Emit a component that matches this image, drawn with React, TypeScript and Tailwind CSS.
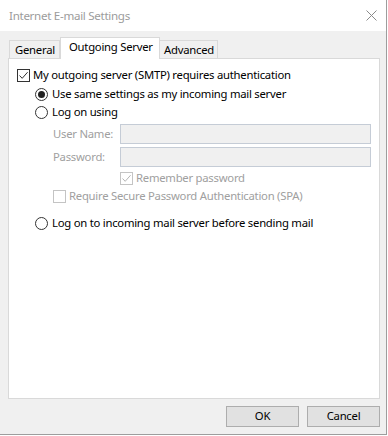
import React from 'react';

const FONT = { fontFamily: '"Noto Sans", "Segoe UI", sans-serif' };

function CheckBox({ checked, disabled }: { checked?: boolean; disabled?: boolean }) {
  const border = disabled ? 'border-[#c4c4c4]' : 'border-[#333333]';
  const stroke = disabled ? '#b5b5b5' : '#333333';
  return (
    <span className={`w-[13px] h-[13px] border ${border} bg-white flex items-center justify-center shrink-0`}>
      {checked && (
        <svg width="11" height="11" viewBox="0 0 11 11">
          <path d="M1.5 5.5 L4.2 8.3 L9.6 2.2" fill="none" stroke={stroke} strokeWidth="1" />
        </svg>
      )}
    </span>
  );
}

function Radio({ checked }: { checked?: boolean }) {
  return (
    <span className="w-[13px] h-[13px] rounded-full border border-[#333333] bg-white flex items-center justify-center shrink-0">
      {checked && <span className="w-[7px] h-[7px] rounded-full bg-[#222222]" />}
    </span>
  );
}

function Field({ label }: { label: string }) {
  return (
    <div className="flex items-center pl-[44px]">
      <span className="w-[67px] text-[#a0a0a0]">{label}</span>
      <div className="w-[251px] h-[20px] border border-[#c5ccd6] bg-[#f0f0f0]" />
    </div>
  );
}

export default function App() {
  return (
    <div className="w-[388px] h-[436px] bg-white overflow-hidden text-[11.3px] tracking-[-0.25px] text-black whitespace-nowrap" style={FONT}>
      <div className="w-[387px] h-[435px] border-r border-b border-[#9d9d9d] flex flex-col">
        {/* title bar */}
        <div className="h-[31px] bg-white flex items-center justify-between pl-[9px] pr-[9px] shrink-0">
          <span className="text-[#9c9c9c] leading-none text-[11.6px] tracking-[-0.3px]">Internet E-mail Settings</span>
          <svg width="11" height="11" viewBox="0 0 11 11">
            <path d="M0.5 0.5 L10.5 10.5 M10.5 0.5 L0.5 10.5" stroke="#8a8a8a" strokeWidth="1" />
          </svg>
        </div>

        <div className="flex-1 bg-[#f0f0f0] flex flex-col pl-[8px] pr-[6px] pt-[6px]">
          {/* tabs */}
          <div className="flex items-end h-[21px] pl-[1px] relative z-10">
            <div className="w-[51px] h-[18px] border border-b-0 border-[#d9d9d9] bg-[#f0f0f0] pl-[5px] flex items-center pt-[1px]">
              General
            </div>
            <div className="w-[100px] h-[22px] -mb-px border border-b-0 border-[#d9d9d9] bg-white pl-[8px] flex items-center pb-[3px]">
              Outgoing Server
            </div>
            <div className="w-[58px] h-[18px] border border-b-0 border-l-0 border-[#d9d9d9] bg-[#f0f0f0] pl-[4px] flex items-center pt-[1px]">
              Advanced
            </div>
          </div>

          {/* panel */}
          <div className="h-[341px] border border-[#d9d9d9] bg-white flex flex-col">
            <div className="flex items-center h-[18px] mt-[7px] pl-[8px] gap-[3px]">
              <CheckBox checked />
              <span>My outgoing server (SMTP) requires authentication</span>
            </div>
            <div className="flex items-center h-[18px] mt-[1px] pl-[26px] gap-[4px]">
              <Radio checked />
              <span>Use same settings as my incoming mail server</span>
            </div>
            <div className="flex items-center h-[18px] pl-[26px] gap-[4px]">
              <Radio />
              <span>Log on using</span>
            </div>
            <div className="mt-[3px]">
              <Field label="User Name:" />
            </div>
            <div className="mt-[3px]">
              <Field label="Password:" />
            </div>
            <div className="flex items-center h-[18px] mt-[2px] pl-[111px] gap-[3px] text-[#a0a0a0]">
              <CheckBox checked disabled />
              <span>Remember password</span>
            </div>
            <div className="flex items-center h-[18px] pl-[44px] gap-[3px] text-[#a0a0a0]">
              <CheckBox disabled />
              <span>Require Secure Password Authentication (SPA)</span>
            </div>
            <div className="flex items-center h-[18px] mt-[9px] pl-[26px] gap-[4px]">
              <Radio />
              <span>Log on to incoming mail server before sending mail</span>
            </div>
          </div>

          {/* buttons */}
          <div className="flex justify-end gap-[8px] pt-[7px]">
            <button className="w-[73px] h-[21px] border border-[#adadad] bg-[#e1e1e1] flex items-center justify-center">
              OK
            </button>
            <button className="w-[73px] h-[21px] border border-[#adadad] bg-[#e1e1e1] flex items-center justify-center">
              Cancel
            </button>
          </div>
        </div>
      </div>
    </div>
  );
}
